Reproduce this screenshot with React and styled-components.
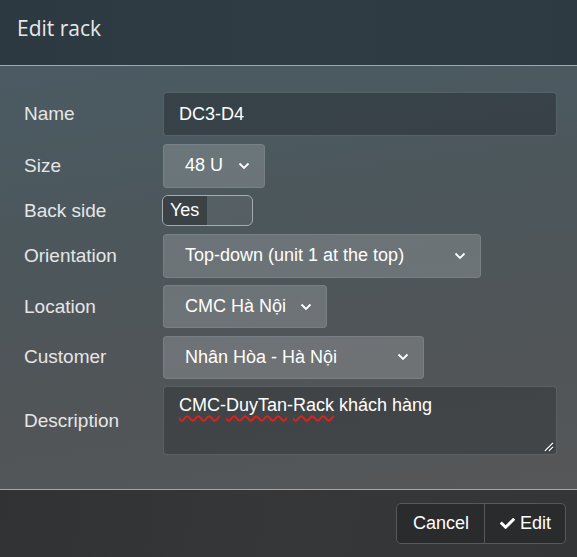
import styled, { createGlobalStyle } from "styled-components";
import { FaCheck } from "react-icons/fa";

const GlobalStyle = createGlobalStyle`
    html, body {
        margin: 0;
        padding: 0;
        background: #333537;
    }
`;

function Chevron() {
    return (
        <svg width="12" height="8" viewBox="0 0 12 8">
            <path d="M1.5 1.5 L6 6 L10.5 1.5" fill="none" stroke="#ffffff" strokeWidth="1.8" />
        </svg>
    );
}

function ResizeGrip() {
    return (
        <svg width="11" height="11" viewBox="0 0 11 11">
            <path d="M10 2 L2 10 M10 6 L6 10" stroke="#ffffff" strokeWidth="1.4" />
            <path d="M10.5 3 L3 10.5 M10.5 7 L7 10.5" stroke="#111" strokeWidth="0.8" />
        </svg>
    );
}

export default function App() {
    return (
        <>
            <GlobalStyle />
            <Modal>
                <Header>
                    <Title>Edit rack</Title>
                </Header>
                <Body>
                    <Row>
                        <Label>Name</Label>
                        <TextInput>DC3-D4</TextInput>
                    </Row>
                    <Row>
                        <Label>Size</Label>
                        <Select $width={102}>48 U<Chevron /></Select>
                    </Row>
                    <Row $height={31}>
                        <Label>Back side</Label>
                        <Toggle>
                            <ToggleOn>Yes</ToggleOn>
                        </Toggle>
                    </Row>
                    <Row>
                        <Label>Orientation</Label>
                        <Select $width={318}>Top-down (unit 1 at the top)<Chevron /></Select>
                    </Row>
                    <Row $height={43}>
                        <Label>Location</Label>
                        <Select $width={164}>CMC Hà Nội<Chevron /></Select>
                    </Row>
                    <Row $height={43}>
                        <Label>Customer</Label>
                        <Select $width={261}>Nhân Hòa - Hà Nội<Chevron /></Select>
                    </Row>
                    <Row $height={69}>
                        <Label>Description</Label>
                        <TextArea>
                            <Misspelled>CMC</Misspelled>-<Misspelled>DuyTan</Misspelled>-<Misspelled>Rack</Misspelled> khách hàng
                            <Grip><ResizeGrip /></Grip>
                        </TextArea>
                    </Row>
                </Body>
                <Footer>
                    <ButtonGroup>
                        <Button>Cancel</Button>
                        <Button><FaCheck size={15} />Edit</Button>
                    </ButtonGroup>
                </Footer>
            </Modal>
        </>
    );
}

const Modal = styled.div`
    width: 577px;
    height: 557px;
    display: flex;
    flex-direction: column;
    font-family: "Liberation Sans", Arial, sans-serif;
    color: #ececec;
    overflow: hidden;
`;

const Header = styled.div`
    height: 66px;
    flex-shrink: 0;
    box-sizing: border-box;
    display: flex;
    align-items: center;
    padding: 0 17px 10px;
    background: linear-gradient(90deg, #2d3941 0%, #303c44 50%, #2e3a42 100%);
    border-bottom: 1px solid #a3a8ab;
`;

const Title = styled.h1`
    margin: 0;
    font-family: "Open Sans", "Noto Sans", sans-serif;
    font-size: 21px;
    font-weight: 400;
    color: #e8e8e8;
`;

const Body = styled.div`
    height: 424px;
    flex-shrink: 0;
    box-sizing: border-box;
    padding: 26px 20px 0 24px;
    display: flex;
    flex-direction: column;
    gap: 7.5px;
    background: linear-gradient(172deg, #4b5b63 0%, #4c575c 35%, #515557 70%, #555759 100%);
    border-bottom: 1px solid #a3a7aa;
`;

const Row = styled.div`
    height: ${p => p.$height || 44}px;
    display: flex;
    align-items: center;
`;

const Label = styled.label`
    width: 139px;
    flex-shrink: 0;
    font-size: 19px;
    color: #e6e6e6;
`;

const TextInput = styled.div`
    flex: 1;
    height: 100%;
    box-sizing: border-box;
    display: flex;
    align-items: center;
    padding: 0 15px;
    background: rgba(40, 48, 53, 0.55);
    border: 1px solid rgba(120, 135, 142, 0.45);
    border-radius: 4px;
    font-size: 18px;
    color: #ffffff;
`;

const Select = styled.div`
    width: ${p => p.$width}px;
    height: 100%;
    box-sizing: border-box;
    display: flex;
    align-items: center;
    justify-content: space-between;
    padding: 0 14px 0 21px;
    background: rgba(200, 205, 208, 0.25);
    border: 1px solid rgba(150, 160, 165, 0.3);
    border-radius: 4px;
    font-size: 18px;
    color: #ffffff;
`;

const Toggle = styled.div`
    width: 91px;
    height: 100%;
    box-sizing: border-box;
    border: 1px solid #a6abad;
    border-radius: 6px;
    overflow: hidden;
    display: flex;
    background: rgba(110, 120, 125, 0.25);
    margin-left: -1px;
`;

const ToggleOn = styled.div`
    width: 44px;
    display: flex;
    align-items: center;
    padding-left: 7px;
    box-sizing: border-box;
    background: #3a4245;
    font-size: 18px;
    color: #ffffff;
`;

const TextArea = styled.div`
    position: relative;
    flex: 1;
    height: 100%;
    box-sizing: border-box;
    padding: 8px 15px;
    background: rgba(45, 48, 50, 0.45);
    border: 1px solid rgba(120, 128, 135, 0.45);
    border-radius: 4px;
    font-size: 18px;
    color: #ffffff;
`;

const Misspelled = styled.span`
    text-decoration: underline wavy #e0201a;
    text-decoration-thickness: 1.5px;
    text-underline-offset: 4px;
`;

const Grip = styled.span`
    position: absolute;
    right: 2px;
    bottom: 2px;
    display: flex;
`;

const Footer = styled.div`
    flex: 1;
    display: flex;
    justify-content: flex-end;
    align-items: flex-start;
    padding: 13px 11px 0 0;
    background: linear-gradient(100deg, #303234 0%, #353739 50%, #333537 100%);
`;

const ButtonGroup = styled.div`
    display: flex;
    height: 41px;
    box-sizing: border-box;
    border: 1px solid #55595c;
    border-radius: 5px;
    overflow: hidden;
    background: #2a2b2d;
`;

const Button = styled.button`
    display: flex;
    align-items: center;
    gap: 5px;
    padding: 0 15px 0 16px;
    background: transparent;
    border: none;
    font-family: "Liberation Sans", Arial, sans-serif;
    font-size: 18px;
    color: #ffffff;
    & + & {
        border-left: 1px solid #55595c;
        padding: 0 14px 0 15px;
    }
`;
